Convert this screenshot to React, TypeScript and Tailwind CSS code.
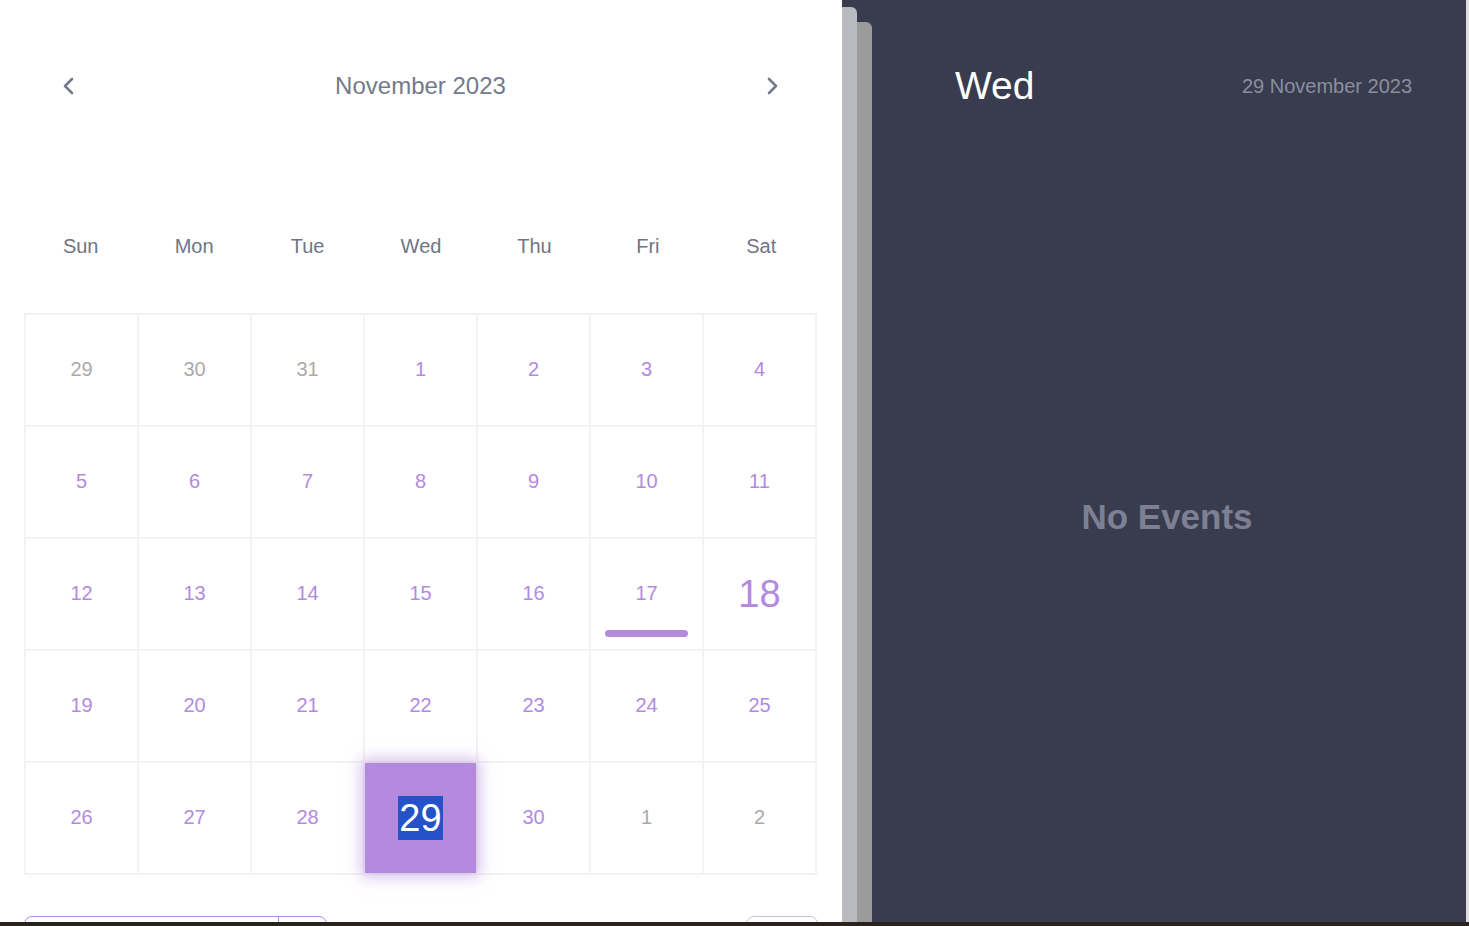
import React from "react";

const days = ["Sun", "Mon", "Tue", "Wed", "Thu", "Fri", "Sat"];

type Cell = { n: number; muted?: boolean };

const cells: Cell[] = [
  { n: 29, muted: true },
  { n: 30, muted: true },
  { n: 31, muted: true },
  ...Array.from({ length: 30 }, (_, i) => ({ n: i + 1 })),
  { n: 1, muted: true },
  { n: 2, muted: true },
];

function Chevron({ dir }: { dir: "left" | "right" }) {
  return (
    <svg width="24" height="24" viewBox="0 0 24 24" fill="none">
      <path
        d={dir === "left" ? "M15 5l-7 7 7 7" : "M9 5l7 7-7 7"}
        stroke="#737a8c"
        strokeWidth="2.6"
        strokeLinecap="round"
        strokeLinejoin="round"
      />
    </svg>
  );
}

function DayCell({ cell, index }: { cell: Cell; index: number }) {
  const isToday = !cell.muted && cell.n === 18;
  const isSelected = !cell.muted && cell.n === 29 && index > 20;
  const hasEvent = !cell.muted && cell.n === 17;

  if (isSelected) {
    return (
      <div className="relative border-r-2 border-b-2 border-[#f3f3f3]">
        <div className="absolute left-0 top-0 right-0 bottom-0 z-10 flex items-center justify-center bg-[#b48ade] shadow-[0_0_14px_4px_rgba(180,138,222,0.55)]">
          <span className="bg-[#2453c9] px-px text-[38px] leading-[44px] text-white">
            {cell.n}
          </span>
        </div>
      </div>
    );
  }

  return (
    <div
      className={
        isToday
          ? "relative flex items-center justify-center border-r-2 border-b-2 border-[#f3f3f3]"
          : "relative flex items-center justify-center border-r-2 border-b-2 border-[#f3f3f3] pb-[3px]"
      }
    >
      <span
        className={
          isToday
            ? "text-[38px] text-[#b28ae0]"
            : cell.muted
            ? "text-[20px] text-[#aaaaaa]"
            : "text-[20px] text-[#b28ae0]"
        }
      >
        {cell.n}
      </span>
      {hasEvent && (
        <div className="absolute bottom-[12px] left-[14px] right-[14px] h-[7px] rounded-full bg-[#b48ade]" />
      )}
    </div>
  );
}

export default function App() {
  return (
    <div
      className="flex h-[926px] w-[1469px] flex-col overflow-hidden"
      style={{ fontFamily: '"Liberation Sans", Arial, sans-serif' }}
    >
      <div className="flex min-h-0 flex-1">
        {/* calendar */}
        <div className="w-[842px] shrink-0 bg-white px-6">
          <div className="mt-[70px] flex h-8 items-center justify-between pl-[33px] pr-[34px]">
            <Chevron dir="left" />
            <div className="text-[24px] text-[#737a8c]">November 2023</div>
            <Chevron dir="right" />
          </div>

          <div className="mt-[132px] grid h-6 grid-cols-7 text-[20px] leading-6 text-[#6f7585]">
            {days.map((d) => (
              <div key={d} className="text-center">
                {d}
              </div>
            ))}
          </div>

          <div className="mt-[55px] grid h-[562px] w-[793px] grid-cols-7 grid-rows-5 border-t-2 border-l-2 border-[#f3f3f3]">
            {cells.map((c, i) => (
              <DayCell key={i} cell={c} index={i} />
            ))}
          </div>

          <div className="mt-[41px] flex justify-between">
            <div className="flex h-10 w-[303px] rounded-lg border border-[#b48ade]">
              <div className="w-[254px] border-r border-[#b48ade]" />
            </div>
            <div className="h-10 w-[72px] rounded-lg border border-[#c9c0d6]" />
          </div>
        </div>

        {/* day panel */}
        <div className="flex flex-1 bg-[#383c4e]">
          <div className="mt-[7px] w-[15px] rounded-tr-md bg-[#b9babf]" />
          <div className="mt-[22px] w-[15px] rounded-tr-md bg-[#9b9b9b]" />
          <div className="flex flex-1 flex-col">
            <div className="mt-[63px] flex h-[46px] items-center justify-between pl-[83px] pr-[54px]">
              <span className="text-[39px] text-white">Wed</span>
              <span className="text-[20px] text-[#8b8f9d]">29 November 2023</span>
            </div>
            <div className="mt-[388px] pr-[4px] text-center text-[35px] font-bold leading-10 text-[#7d8092]">
              No Events
            </div>
          </div>
          <div className="w-[3px] bg-[#dedede]" />
        </div>
      </div>
      <div className="h-[4px] shrink-0 bg-[#2a221d]" />
    </div>
  );
}
